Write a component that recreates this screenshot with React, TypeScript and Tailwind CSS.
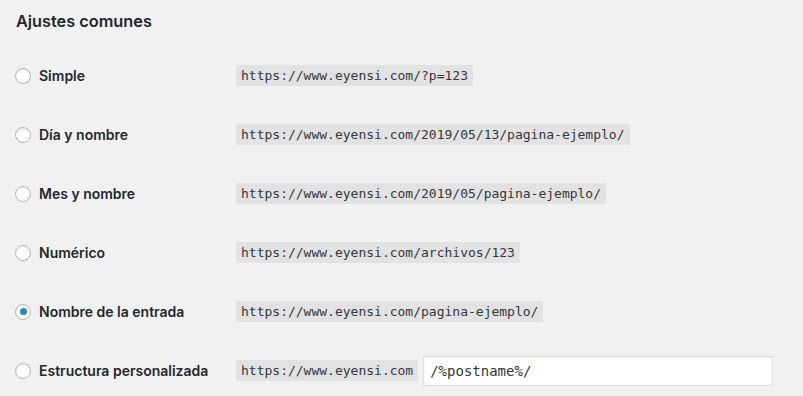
const rows = [
  { label: 'Simple', url: 'https://www.eyensi.com/?p=123' },
  { label: 'Día y nombre', url: 'https://www.eyensi.com/2019/05/13/pagina-ejemplo/' },
  { label: 'Mes y nombre', url: 'https://www.eyensi.com/2019/05/pagina-ejemplo/' },
  { label: 'Numérico', url: 'https://www.eyensi.com/archivos/123' },
  { label: 'Nombre de la entrada', url: 'https://www.eyensi.com/pagina-ejemplo/', checked: true },
];

function Radio({ checked }: { checked?: boolean }) {
  return (
    <span className="w-4 h-4 rounded-full bg-white border border-[#b4b9be] shadow-[inset_0_1px_2px_rgba(0,0,0,0.1)] flex items-center justify-center shrink-0">
      {checked && <span className="w-[7px] h-[7px] rounded-full bg-[#1e8cbe]" />}
    </span>
  );
}

function Code({ children }: { children: React.ReactNode }) {
  return (
    <code className="bg-[#e2e2e2] text-[#32373c] text-[13px] leading-4 pt-[3px] pb-[2px] px-[5px] font-['DejaVu_Sans_Mono',monospace]">
      {children}
    </code>
  );
}

export default function App() {
  return (
    <div className="min-h-screen bg-[#f1f1f1] text-[#23282d] font-['Inter','Liberation_Sans',sans-serif] pl-[15px]">
      <h2 className="pt-[9px] h-[46px] text-[16.3px] font-semibold leading-6 pl-px">Ajustes comunes</h2>
      {rows.map((r) => (
        <div key={r.label} className="h-[59px] flex items-center">
          <div className="w-[221px] flex items-center gap-2">
            <Radio checked={r.checked} />
            <span className="text-sm font-semibold">{r.label}</span>
          </div>
          <Code>{r.url}</Code>
        </div>
      ))}
      <div className="h-[59px] flex items-center">
        <div className="w-[221px] flex items-center gap-2">
          <Radio />
          <span className="text-sm font-semibold">Estructura personalizada</span>
        </div>
        <Code>https://www.eyensi.com</Code>
        <input
          readOnly
          value="/%postname%/"
          className="ml-[5px] w-[350px] h-[30px] bg-white border border-[#dddddd] shadow-[inset_0_1px_2px_rgba(0,0,0,0.07)] px-[6px] text-sm text-[#32373c] outline-none font-['DejaVu_Sans_Mono',monospace]"
        />
      </div>
    </div>
  );
}
